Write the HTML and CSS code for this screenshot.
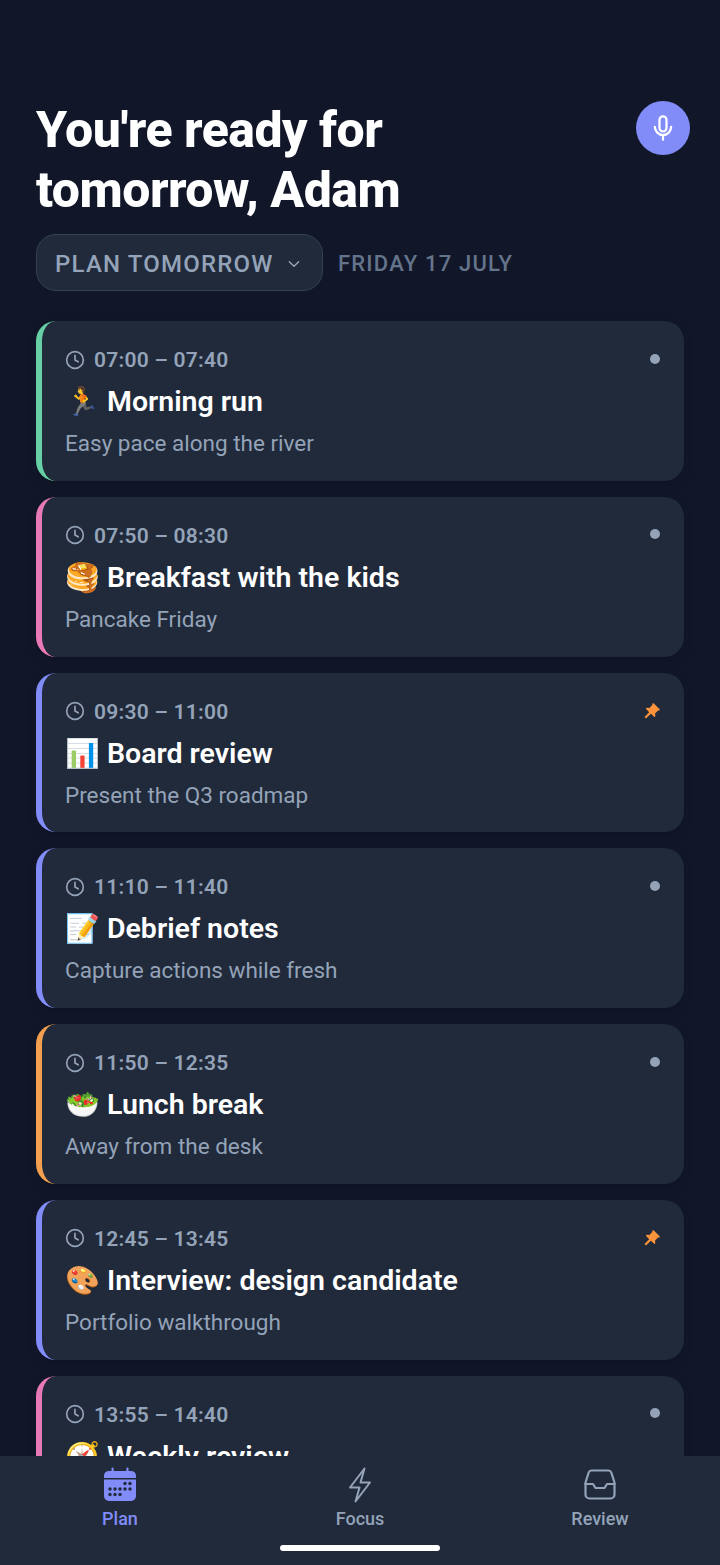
FILE: index.html
```html
<!DOCTYPE html>
<html lang="en">
  <head>
    <meta charset="UTF-8" />
    <meta name="viewport" content="width=device-width, initial-scale=1.0" />
    <title>Plan</title>
    <link rel="stylesheet" href="styles.css">
  </head>
  <body>
    <svg class="defs" width="0" height="0">
      <symbol id="clock" viewBox="0 0 24 24"><circle cx="12" cy="12" r="10" fill="none" stroke="currentColor" stroke-width="2"/><path d="M12 6.500V12l3.800 2.200" fill="none" stroke="currentColor" stroke-width="2" stroke-linecap="round" stroke-linejoin="round"/></symbol>
      <symbol id="pin" viewBox="0 0 24 24"><path d="M14.200 1.800 22.200 9.800c.6.600.2 1.600-.6 1.600h-1.500l-4 4 .3 3.400c.1.900-1 1.400-1.600.8L10.500 15.800 4 22 2 20l6.200-6.500-4-4.300c-.6-.6-.1-1.700.8-1.600l3.400.3 4-4V2.400c0-.8 1.200-1.200 1.800-.6z" fill="currentColor"/></symbol>
    </svg>

    <main class="screen">
      <header class="top">
        <h1>You're ready for<br />tomorrow, Adam</h1>
        <button class="mic">
          <svg width="28" height="28" viewBox="0 0 24 24" fill="none" stroke="currentColor" stroke-width="1.900" stroke-linecap="round"><rect x="9" y="2" width="6" height="13" rx="3"/><path d="M5 11a7 7 0 0 0 14 0M12 18v4"/></svg>
        </button>
      </header>

      <div class="filters">
        <div class="pill">
          <span>PLAN TOMORROW</span>
          <svg width="16" height="16" viewBox="0 0 24 24" fill="none" stroke="currentColor" stroke-width="2.200" stroke-linecap="round" stroke-linejoin="round"><path d="m5 8.500 7 7 7-7"/></svg>
        </div>
        <span class="date">FRIDAY 17 JULY</span>
      </div>

      <div class="cards">
        <article class="card green">
          <div class="time"><svg><use href="#clock"/></svg>07:00 – 07:40</div>
          <span class="dot"></span>
          <h2><span class="emoji">🏃</span> Morning run</h2>
          <p>Easy pace along the river</p>
        </article>
        <article class="card pink">
          <div class="time"><svg><use href="#clock"/></svg>07:50 – 08:30</div>
          <span class="dot"></span>
          <h2><span class="emoji">🥞</span> Breakfast with the kids</h2>
          <p>Pancake Friday</p>
        </article>
        <article class="card blue">
          <div class="time"><svg><use href="#clock"/></svg>09:30 – 11:00</div>
          <svg class="pin"><use href="#pin"/></svg>
          <h2><span class="emoji">📊</span> Board review</h2>
          <p>Present the Q3 roadmap</p>
        </article>
        <article class="card blue">
          <div class="time"><svg><use href="#clock"/></svg>11:10 – 11:40</div>
          <span class="dot"></span>
          <h2><span class="emoji">📝</span> Debrief notes</h2>
          <p>Capture actions while fresh</p>
        </article>
        <article class="card orange">
          <div class="time"><svg><use href="#clock"/></svg>11:50 – 12:35</div>
          <span class="dot"></span>
          <h2><span class="emoji">🥗</span> Lunch break</h2>
          <p>Away from the desk</p>
        </article>
        <article class="card blue">
          <div class="time"><svg><use href="#clock"/></svg>12:45 – 13:45</div>
          <svg class="pin"><use href="#pin"/></svg>
          <h2><span class="emoji">🎨</span> Interview: design candidate</h2>
          <p>Portfolio walkthrough</p>
        </article>
        <article class="card pink">
          <div class="time"><svg><use href="#clock"/></svg>13:55 – 14:40</div>
          <span class="dot"></span>
          <h2><span class="emoji">🧭</span> Weekly review</h2>
        </article>
      </div>
    </main>

    <nav class="tabs">
      <div class="tab active">
        <svg width="36" height="36" viewBox="0 0 36 36"><path d="M9.500 1.500a1.100 1.100 0 0 1 2.200 0V4h12.600V1.500a1.100 1.100 0 0 1 2.200 0V4H29a5 5 0 0 1 5 4.500V11H2V8.500A5 5 0 0 1 7 4h2.500z" fill="currentColor"/><path d="M2 12.500h32V29a5 5 0 0 1-5 5H7a5 5 0 0 1-5-5z" fill="currentColor"/><g fill="#202a3b"><circle cx="23" cy="16.500" r="1.700"/><circle cx="28" cy="16.500" r="1.700"/><circle cx="13" cy="22" r="1.700"/><circle cx="18" cy="22" r="1.700"/><circle cx="23" cy="22" r="1.700"/><circle cx="28" cy="22" r="1.700"/><circle cx="8" cy="22" r="1.700"/><circle cx="8" cy="27.500" r="1.700"/><circle cx="13" cy="27.500" r="1.700"/><circle cx="18" cy="27.500" r="1.700"/></g></svg>
        <span>Plan</span>
      </div>
      <div class="tab">
        <svg width="36" height="36" viewBox="0 0 36 36" fill="none" stroke="currentColor" stroke-width="2" stroke-linejoin="round"><path d="M22.500 1.500 8 20.500h9.500l-4 14L28 15.500h-9.500z"/></svg>
        <span>Focus</span>
      </div>
      <div class="tab">
        <svg width="36" height="36" viewBox="0 0 36 36" fill="none" stroke="currentColor" stroke-width="2.200" stroke-linejoin="round" stroke-linecap="round"><path d="M9.500 3.500h17a3 3 0 0 1 2.800 2l3.200 10v12a4 4 0 0 1-4 4h-21a4 4 0 0 1-4-4v-12l3.200-10a3 3 0 0 1 2.800-2z"/><path d="M3.500 17h7.500l2.500 4h9l2.500-4h7.500" /></svg>
        <span>Review</span>
      </div>
      <div class="home-bar"></div>
    </nav>
  </body>
</html>
```

FILE: styles.css
```css
/* General styles */
* {
  box-sizing: border-box;
}

body {
  font-family: "Roboto", "Noto Color Emoji", sans-serif;
  background-color: #111729;
  color: #fff;
  margin: 0;
  height: 1565px;
  display: flex;
  flex-direction: column;
  overflow: hidden;
}

.defs {
  position: absolute;
}

.screen {
  flex: 1;
  min-height: 0;
  overflow: hidden;
  padding: 100px 36px 0;
}

/* Header */
.top {
  display: flex;
  justify-content: space-between;
  align-items: flex-start;
}

h1 {
  margin: 0;
  font-size: 50px;
  line-height: 60px;
  font-weight: 800;
  letter-spacing: -0.5px;
}

.mic {
  width: 54px;
  height: 54px;
  margin: 1px -6px 0 0;
  border: 0;
  border-radius: 50%;
  background-color: #818cf8;
  color: #fff;
  display: flex;
  align-items: center;
  justify-content: center;
  padding: 0;
}

.filters {
  margin-top: 14px;
  display: flex;
  align-items: center;
  gap: 15px;
}

.pill {
  width: 287px;
  height: 57px;
  padding: 3px 18px 0;
  display: flex;
  align-items: center;
  gap: 12px;
  background-color: #202a3b;
  border: 1px solid #334155;
  border-radius: 20px;
  color: #94a3b8;
  font-size: 24px;
  font-weight: 500;
  letter-spacing: 1.2px;
  white-space: nowrap;
}

.date {
  padding-top: 1px;
  color: #64748b;
  font-size: 22px;
  font-weight: 500;
  letter-spacing: 1.2px;
}

/* Cards */
.cards {
  margin-top: 30px;
  display: flex;
  flex-direction: column;
  gap: 16px;
}

.card {
  position: relative;
  flex: none;
  height: 159.800px;
  padding: 26px 24px 0 23px;
  background-color: #202a3b;
  border-left: 6px solid #818cf8;
  border-radius: 20px;
  box-shadow: 0 4px 10px rgba(0, 0, 0, 0.12);
}

.card.green {
  border-left-color: #66cfa5;
}

.card.pink {
  border-left-color: #e779b6;
}

.card.orange {
  border-left-color: #f2a04f;
}

.time {
  display: flex;
  align-items: center;
  gap: 9px;
  height: 26px;
  color: #94a3b8;
  font-size: 21px;
  font-weight: 600;
  letter-spacing: 0.25px;
}

.time svg {
  width: 20px;
  height: 20px;
  margin-top: -1px;
}

.dot {
  position: absolute;
  top: 32.500px;
  right: 24px;
  width: 10px;
  height: 10px;
  border-radius: 50%;
  background-color: #94a3b8;
}

.pin {
  position: absolute;
  top: 29px;
  right: 23px;
  width: 18px;
  height: 18px;
  color: #fb923c;
}

h2 {
  margin: 11px 0 0;
  font-size: 28.500px;
  line-height: 36px;
  font-weight: 600;
  white-space: nowrap;
}

.emoji {
  font-size: 28px;
}

p {
  margin: 9px 0 0;
  color: #94a3b8;
  font-size: 22.500px;
  line-height: 28px;
}

/* Bottom tabs */
.tabs {
  position: relative;
  flex: none;
  height: 109px;
  padding-top: 11px;
  display: grid;
  grid-template-columns: repeat(3, 240px);
  background-color: #202a3b;
}

.tab {
  display: flex;
  flex-direction: column;
  align-items: center;
  gap: 5px;
  color: #94a3b8;
  font-size: 18px;
  font-weight: 500;
}

.tab.active {
  color: #818cf8;
}

.home-bar {
  position: absolute;
  left: 280px;
  bottom: 14px;
  width: 160px;
  height: 6px;
  border-radius: 3px;
  background-color: #fff;
}
```
